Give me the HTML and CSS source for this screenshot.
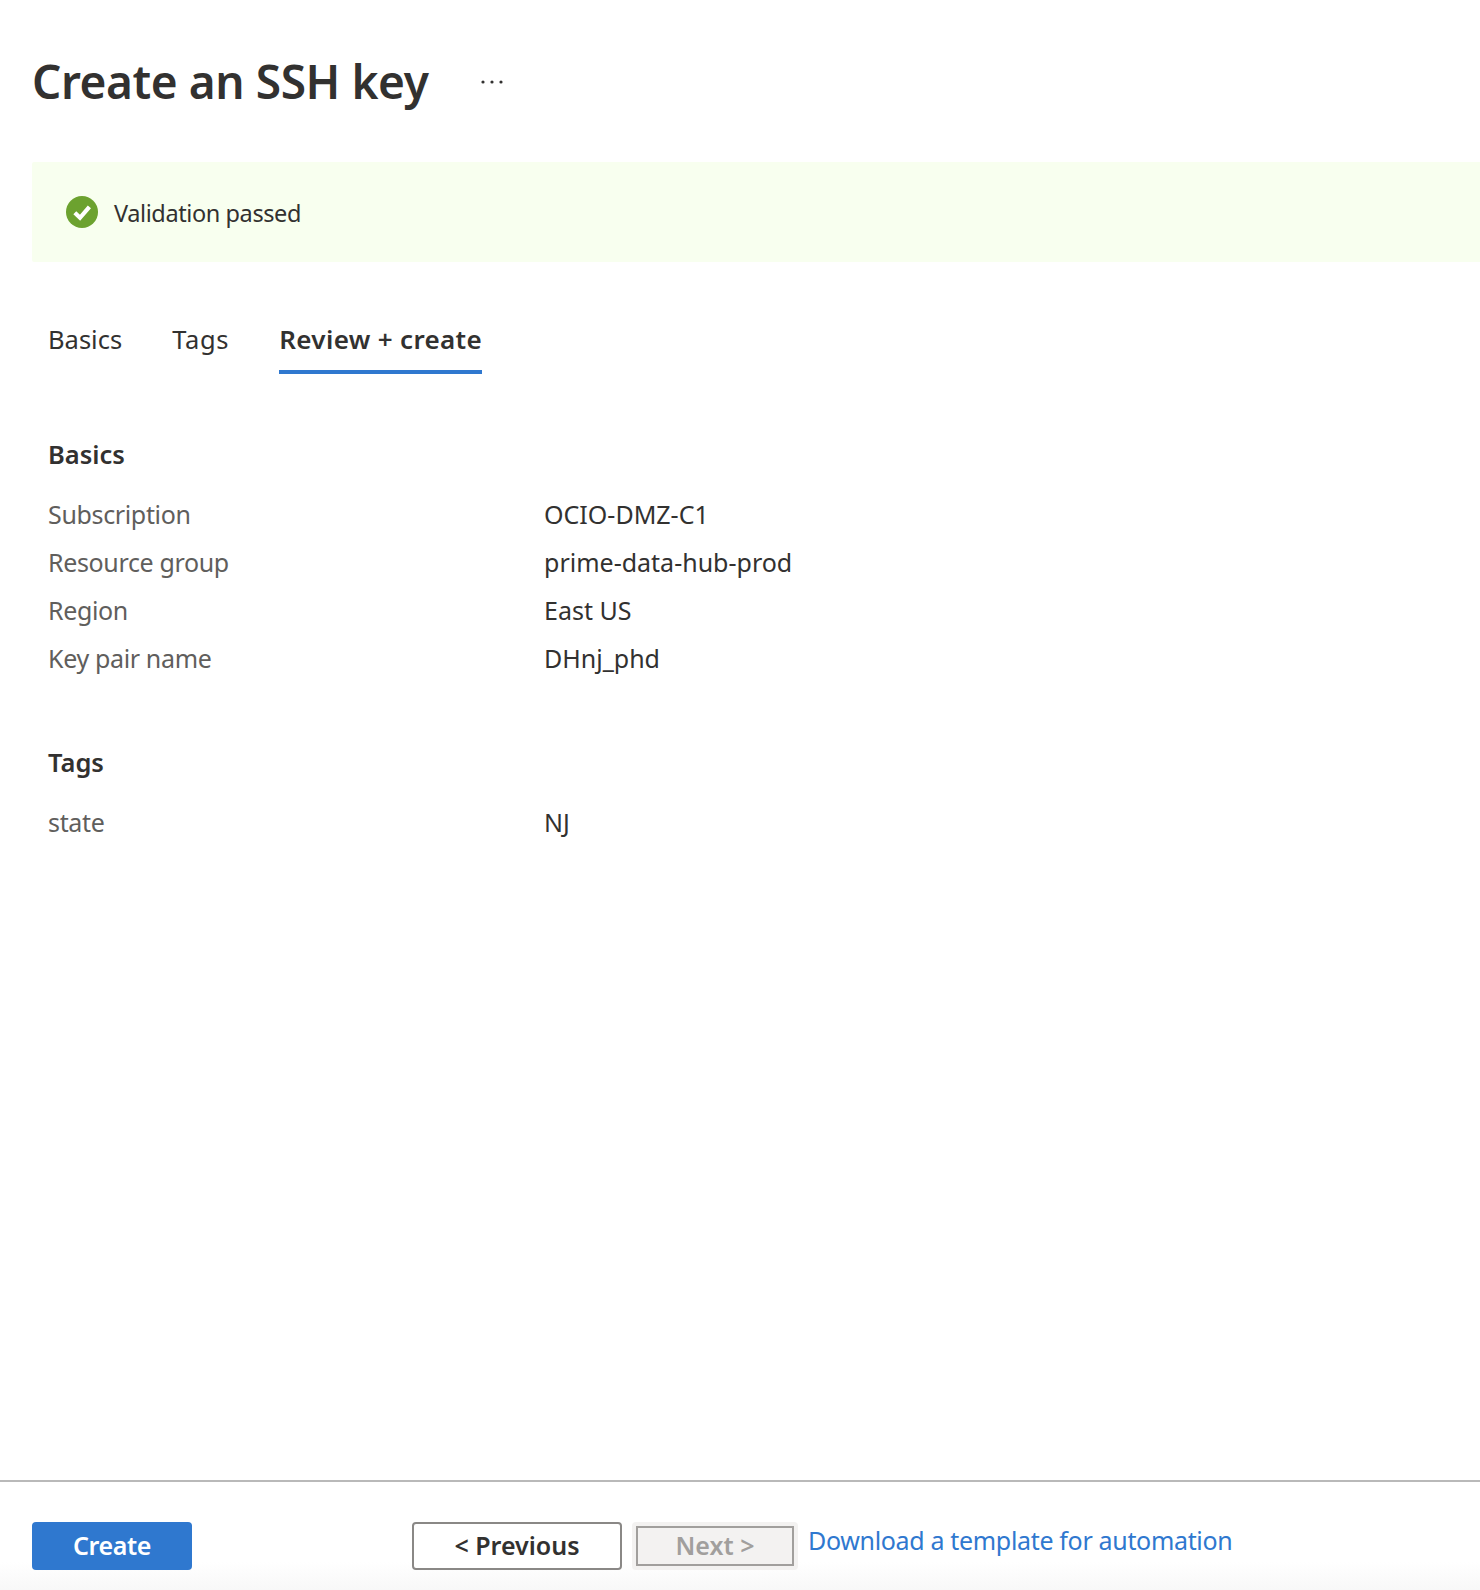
FILE: index.html
```html
<!DOCTYPE html>
<html lang="en">
<head>
  <meta charset="UTF-8">
  <title>Create an SSH key</title>
  <link rel="stylesheet" href="styles.css">
</head>
<body>
  <main class="content">
    <div class="title-row">
      <h1>Create an SSH key</h1>
      <button class="more-btn" aria-label="More">
        <svg width="22" height="4" viewBox="0 0 22 4"><circle cx="2" cy="2" r="1.6"/><circle cx="11" cy="2" r="1.6"/><circle cx="20" cy="2" r="1.6"/></svg>
      </button>
    </div>

    <div class="banner">
      <svg class="banner-icon" width="32" height="32" viewBox="0 0 32 32">
        <circle cx="16" cy="16" r="16" fill="#6ca22f"/>
        <path d="M8.8 16.8l5.2 5 9.4-11" fill="none" stroke="#fff" stroke-width="4.2"/>
      </svg>
      <span class="banner-text">Validation passed</span>
    </div>

    <div class="tabs">
      <a class="tab">Basics</a>
      <a class="tab">Tags</a>
      <a class="tab active">Review + create</a>
    </div>

    <section class="summary">
      <h2>Basics</h2>
      <div class="row"><span class="label">Subscription</span><span class="value">OCIO-DMZ-C1</span></div>
      <div class="row"><span class="label">Resource group</span><span class="value">prime-data-hub-prod</span></div>
      <div class="row"><span class="label">Region</span><span class="value">East US</span></div>
      <div class="row"><span class="label">Key pair name</span><span class="value">DHnj_phd</span></div>
    </section>

    <section class="summary">
      <h2>Tags</h2>
      <div class="row"><span class="label">state</span><span class="value">NJ</span></div>
    </section>
  </main>

  <footer class="footer">
    <button class="btn btn-primary">Create</button>
    <button class="btn btn-prev">&lt; Previous</button>
    <div class="next-wrap"><button class="btn btn-next" disabled>Next &gt;</button></div>
    <a class="template-link">Download a template for automation</a>
  </footer>
</body>
</html>
```

FILE: styles.css
```css
html, body {
  height: 100%;
}

body {
  margin: 0;
  font-family: "Noto Sans", "Open Sans", sans-serif;
  font-size: 25px;
  color: #323130;
  background: #fff;
  display: flex;
  flex-direction: column;
  height: 100vh;
  overflow: hidden;
}

.content {
  flex: 1;
  padding-left: 32px;
}

.title-row {
  display: flex;
  align-items: center;
  height: 64px;
  margin-top: 49px;
}

h1 {
  margin: 0;
  font-size: 46px;
  font-weight: 600;
  line-height: 64px;
  letter-spacing: -0.42px;
}

.more-btn {
  margin-left: 53px;
  padding: 2px 0 0;
  border: none;
  background: none;
  display: flex;
}

.more-btn svg {
  fill: #323130;
}

.banner {
  display: flex;
  align-items: center;
  height: 100px;
  margin-top: 49px;
  padding-left: 34px;
  background: #f8ffef;
  border-radius: 2px 0 0 2px;
}

.banner-icon {
  margin-right: 16px;
}

.banner-text {
  padding-top: 2px;
  font-size: 23.5px;
  letter-spacing: -0.4px;
}

.tabs {
  display: flex;
  gap: 50px;
  margin-top: 46px;
  padding-left: 16px;
}

.tab {
  height: 66px;
  line-height: 62px;
  font-size: 25.5px;
  box-sizing: border-box;
}

.tab:nth-child(2) {
  letter-spacing: 0.7px;
}

.tab.active {
  font-size: 26px;
  font-weight: 600;
  letter-spacing: 0.34px;
  border-bottom: 4px solid #2f78cf;
}

.summary {
  padding-left: 16px;
}

.summary h2 {
  margin: 0;
  font-size: 25.5px;
  font-weight: 600;
  line-height: 36px;
}

.tabs + .summary {
  margin-top: 62px;
}

.summary + .summary {
  margin-top: 56px;
}

.summary h2 + .row {
  margin-top: 24px;
}

.row {
  display: flex;
  height: 48px;
  line-height: 36px;
}

.label {
  width: 496px;
  color: #605e5c;
  letter-spacing: -0.35px;
}

.footer {
  display: flex;
  align-items: flex-start;
  height: 110px;
  box-sizing: border-box;
  padding: 40px 0 0 32px;
  border-top: 2px solid #b9b9b9;
  background: linear-gradient(#fff 80px, #f8f8f8);
}

.btn {
  box-sizing: border-box;
  font-family: inherit;
  font-size: 25px;
  font-weight: 600;
  padding: 0 0 2px;
  border-radius: 4px;
}

.btn-primary {
  width: 160px;
  height: 48px;
  color: #fff;
  letter-spacing: -0.4px;
  background: #2f78cf;
  border: none;
}

.btn-prev {
  width: 210px;
  height: 48px;
  margin-left: 220px;
  color: #323130;
  background: #fff;
  border: 2px solid #8a8886;
}

.next-wrap {
  display: flex;
  align-items: center;
  justify-content: center;
  width: 166px;
  height: 48px;
  margin-left: 10px;
  background: #f3f2f1;
  border-radius: 4px;
}

.btn-next {
  width: 158px;
  height: 40px;
  color: #a19f9d;
  background: #f3f2f1;
  border: 2px solid #a19f9d;
  border-radius: 0;
}

.template-link {
  margin-left: 10px;
  line-height: 36px;
  letter-spacing: -0.33px;
  color: #2f78cf;
}
```
